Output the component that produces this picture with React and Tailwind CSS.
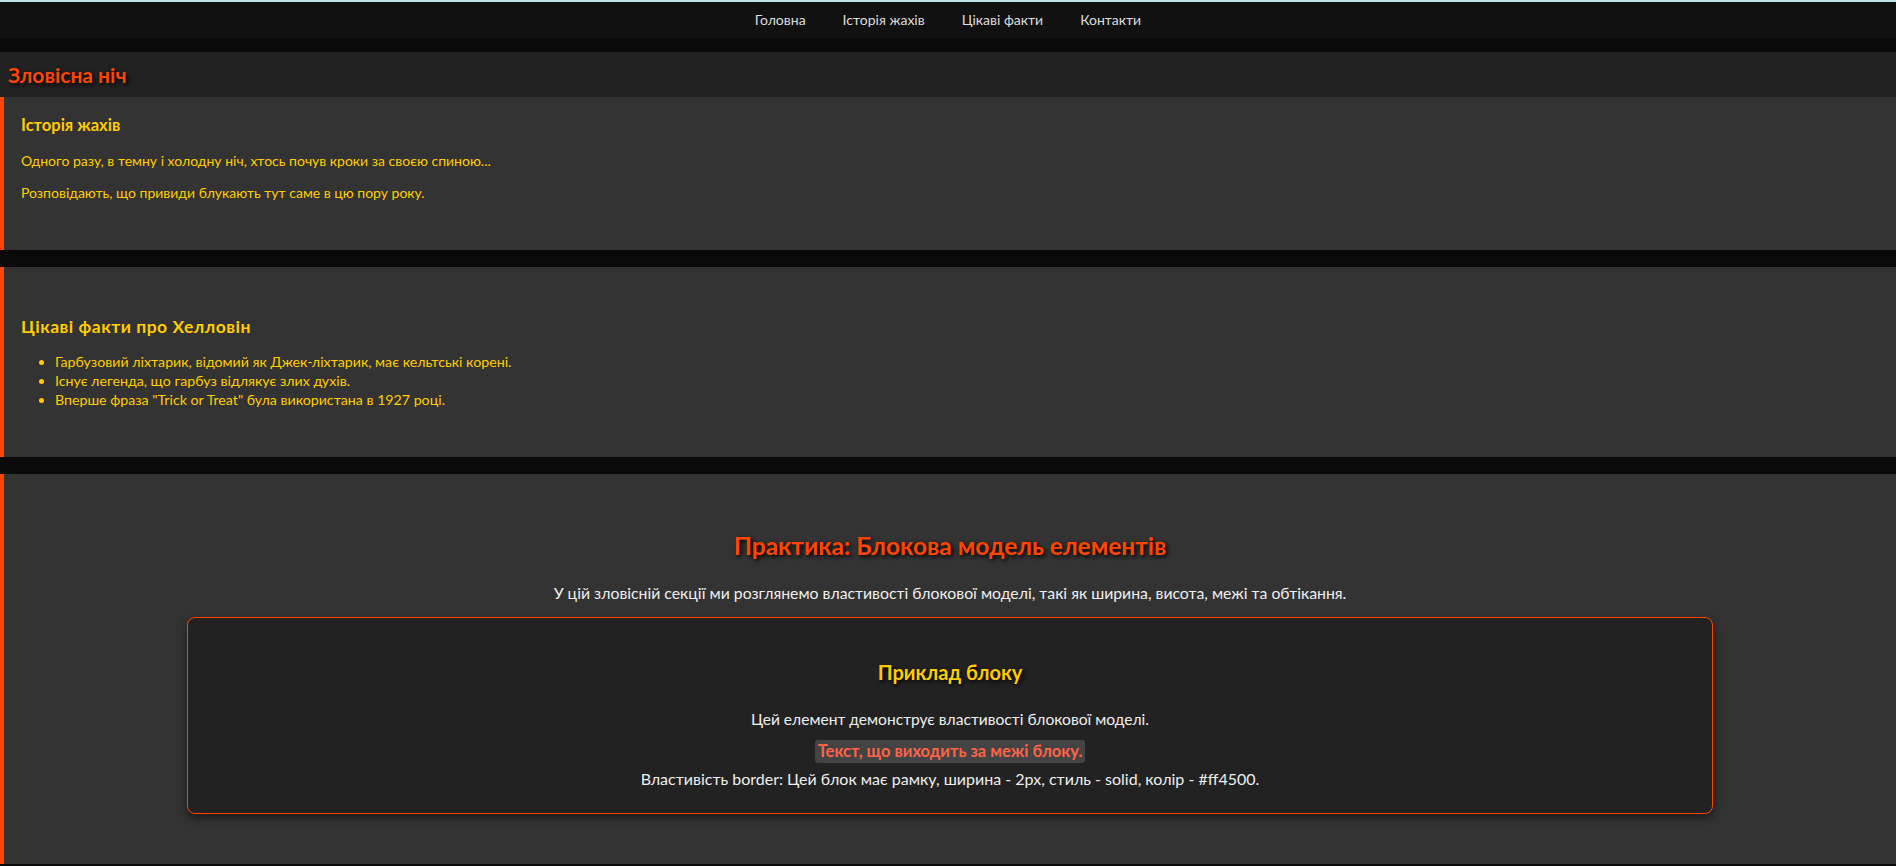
import React from "react";

const navItems = ["Головна", "Історія жахів", "Цікаві факти", "Контакти"];

const facts = [
  "Гарбузовий ліхтарик, відомий як Джек-ліхтарик, має кельтські корені.",
  "Існує легенда, що гарбуз відлякує злих духів.",
  'Вперше фраза "Trick or Treat" була використана в 1927 році.',
];

export default function App() {
  return (
    <div className="min-h-[866px] bg-[#0a0a0a] font-['Lato',sans-serif] text-[#ffcc00]">
      {/* Nav */}
      <nav className="h-[38px] border-t-2 border-[#bfe3e6] bg-[#111111] flex items-center justify-center gap-[37px] text-[14px] text-[#dddddd]">
        {navItems.map((item) => (
          <a key={item} href="#" className="leading-[20px]">
            {item}
          </a>
        ))}
      </nav>

      {/* Header */}
      <header className="mt-[14px] h-[45px] bg-[#222222] flex items-center px-[8px]">
        <h1 className="text-[21px] font-bold text-[#ff4500] [text-shadow:2px_2px_4px_#000]">
          Зловісна ніч
        </h1>
      </header>

      {/* Історія */}
      <section className="h-[153px] bg-[#333333] border-l-4 border-[#ff4500] pl-[17px] pt-[18px]">
        <h3 className="text-[16.5px] leading-[20px] font-bold">Історія жахів</h3>
        <p className="mt-[17px] text-[14px] leading-[18px]">
          Одного разу, в темну і холодну ніч, хтось почув кроки за своєю спиною...
        </p>
        <p className="mt-[14px] text-[14px] leading-[18px]">
          Розповідають, що привиди блукають тут саме в цю пору року.
        </p>
      </section>

      {/* Факти */}
      <section className="mt-[17px] h-[190px] bg-[#333333] border-l-4 border-[#ff4500] pl-[17px] pt-[50px]">
        <h3 className="text-[17.5px] leading-[20px] font-bold tracking-[0.5px]">Цікаві факти про Хелловін</h3>
        <ul className="mt-[15px] pl-[34px] list-disc text-[14.2px] leading-[19px]">
          {facts.map((f) => (
            <li key={f}>{f}</li>
          ))}
        </ul>
      </section>

      {/* Практика */}
      <section className="mt-[17px] h-[390px] bg-[#333333] border-l-4 border-[#ff4500] px-[20px] pt-[57px] text-center">
        <h2 className="text-[24.5px] leading-[30px] font-bold text-[#ff4500] [text-shadow:2px_2px_4px_#000]">
          Практика: Блокова модель елементів
        </h2>
        <p className="mt-[22px] text-[15.8px] leading-[20px] text-[#eeeeee]">
          У цій зловісній секції ми розглянемо властивості блокової моделі, такі як ширина, висота, межі та обтікання.
        </p>
        <div className="mx-auto mt-[14px] w-[calc(80%+44px)] h-[197px] bg-[#222222] border border-[#ff4500] rounded-[8px] shadow-[0_4px_10px_rgba(0,0,0,0.5)] pt-[41px] text-[#eeeeee]">
          <h3 className="text-[20px] leading-[26px] font-bold text-[#ffcc00] [text-shadow:2px_2px_4px_#000]">
            Приклад блоку
          </h3>
          <p className="mt-[24px] text-[15.6px] leading-[20px]">
            Цей елемент демонструє властивості блокової моделі.
          </p>
          <div className="mt-[10px]">
            <span className="inline-block px-[3px] h-[23px] leading-[23px] rounded-[3px] bg-[#444444] text-[16.5px] font-bold text-[#ff6347]">
              Текст, що виходить за межі блоку.
            </span>
          </div>
          <p className="mt-[6px] text-[16px] leading-[20px]">
            Властивість <span>border</span>: Цей блок має рамку, ширина - 2px, стиль - solid, колір - #ff4500.
          </p>
        </div>
      </section>
    </div>
  );
}
